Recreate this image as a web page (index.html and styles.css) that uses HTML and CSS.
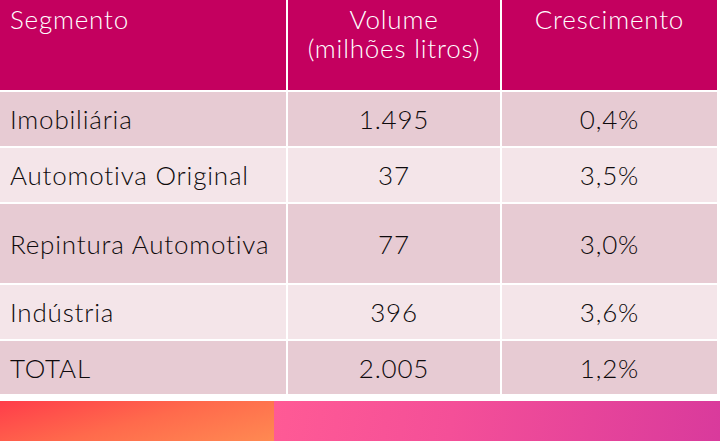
FILE: index.html
```html
<!DOCTYPE html>
<html lang="pt">
<head>
<meta charset="utf-8">
<link rel="stylesheet" href="styles.css">
</head>
<body>
<div class="page">
  <table class="data">
    <thead>
      <tr class="head">
        <th class="c1">Segmento</th>
        <th class="c2">Volume<br>(milhões litros)</th>
        <th class="c3">Crescimento</th>
      </tr>
    </thead>
    <tbody>
      <tr class="odd"><td class="c1">Imobiliária</td><td class="c2">1.495</td><td class="c3">0,4%</td></tr>
      <tr class="even"><td class="c1">Automotiva Original</td><td class="c2">37</td><td class="c3">3,5%</td></tr>
      <tr class="odd tall"><td class="c1">Repintura Automotiva</td><td class="c2">77</td><td class="c3">3,0%</td></tr>
      <tr class="even"><td class="c1">Indústria</td><td class="c2">396</td><td class="c3">3,6%</td></tr>
      <tr class="odd last"><td class="c1">TOTAL</td><td class="c2">2.005</td><td class="c3">1,2%</td></tr>
    </tbody>
  </table>
  <div class="band">
    <div class="band-left"></div>
    <div class="band-right"></div>
  </div>
</div>
</body>
</html>
```
FILE: styles.css
```css
html, body {
  margin: 0;
  padding: 0;
  background: #ffffff;
}
.page {
  width: 720px;
  height: 441px;
  overflow: hidden;
  font-family: "Lato", "Noto Sans", sans-serif;
}
.data {
  width: 717px;
  border-collapse: collapse;
  table-layout: fixed;
}
.data th, .data td {
  padding: 0;
  border-right: 2px solid #ffffff;
  border-bottom: 2px solid #ffffff;
  font-size: 26px;
  font-weight: 300;
  letter-spacing: 0.8px;
}
.data .c1 { width: 287px; text-align: left; padding-left: 10px; }
.data .c2 { width: 214px; text-align: center; }
.data .c3 { text-align: center; border-right: none; }
.head th {
  background: #c4005f;
  color: #ffffff;
  height: 91px;
  vertical-align: top;
  line-height: 29px;
  padding-top: 5px;
  box-sizing: border-box;
}
.head th.c1 { padding-left: 10px; }
tbody td {
  color: #0e0a0c;
  height: 54px;
  line-height: 28px;
  vertical-align: middle;
}
tbody tr.odd td { background: #e7cbd3; }
tbody tr.even td { background: #f4e5e9; }
tbody tr.tall td { height: 79px; }
tbody tr.last td { height: 53px; border-bottom: none; }
.band {
  display: flex;
  height: 41px;
  margin-top: 7px;
}
.band-left {
  width: 274px;
  background: linear-gradient(165deg, #ff3d4a 0%, #ff6a4c 50%, #ff8a52 100%);
}
.band-right {
  flex: 1;
  background: linear-gradient(100deg, #ff5a95 0%, #f44f98 40%, #d93a9c 100%);
}
```
